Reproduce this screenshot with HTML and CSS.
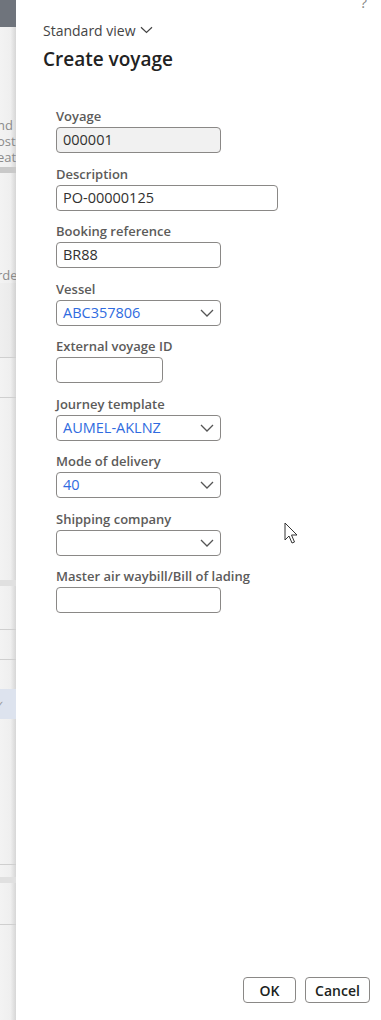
FILE: index.html
```html
<!DOCTYPE html>
<html lang="en">
<head>
    <meta charset="UTF-8">
    <meta name="viewport" content="width=device-width, initial-scale=1.0">
    <title>Create voyage</title>
    <link rel="stylesheet" href="styles.css">
</head>
<body>
    <div class="backdrop">
        <div class="bd-top"></div>
        <div class="bd-gap" style="height: 90px"></div>
        <div class="bd-text">nd</div>
        <div class="bd-text">osts</div>
        <div class="bd-text">eat</div>
        <div class="bd-gap" style="height: 2px"></div>
        <div class="bd-bar"></div>
        <div class="bd-gap" style="height: 94px"></div>
        <div class="bd-text">rde</div>
        <div class="bd-band" style="height: 74px"></div>
        <div class="bd-line"></div>
        <div class="bd-gap" style="height: 39px"></div>
        <div class="bd-line"></div>
        <div class="bd-gap" style="height: 182px"></div>
        <div class="bd-bar thin"></div>
        <div class="bd-gap" style="height: 43px"></div>
        <div class="bd-line"></div>
        <div class="bd-gap" style="height: 29px"></div>
        <div class="bd-line"></div>
        <div class="bd-gap" style="height: 29px"></div>
        <div class="bd-selected">&#10003;</div>
        <div class="bd-gap" style="height: 145px"></div>
        <div class="bd-line"></div>
        <div class="bd-gap" style="height: 12px"></div>
        <div class="bd-bar thin"></div>
        <div class="bd-gap" style="height: 41px"></div>
        <div class="bd-line"></div>
    </div>

    <div class="panel">
        <div class="topbar"><span class="help">?</span></div>

        <div class="view-picker">
            Standard view
            <svg class="chev-small" width="13" height="8" viewBox="0 0 13 8"><path d="M1 1.2 L6.5 6.5 L12 1.2" fill="none" stroke="#444" stroke-width="1.2"/></svg>
        </div>
        <h1>Create voyage</h1>

        <div class="fields">
            <div class="field">
                <label>Voyage</label>
                <div class="input readonly w-md">000001</div>
            </div>
            <div class="field">
                <label>Description</label>
                <div class="input w-lg">PO-00000125</div>
            </div>
            <div class="field">
                <label>Booking reference</label>
                <div class="input w-md">BR88</div>
            </div>
            <div class="field">
                <label>Vessel</label>
                <div class="input select w-md"><span class="link">ABC357806</span><svg class="chev" width="14" height="8" viewBox="0 0 14 8"><path d="M1 1 L7 7 L13 1" fill="none" stroke="#555" stroke-width="1.3"/></svg></div>
            </div>
            <div class="field">
                <label>External voyage ID</label>
                <div class="input w-sm"></div>
            </div>
            <div class="field">
                <label>Journey template</label>
                <div class="input select w-md"><span class="link">AUMEL-AKLNZ</span><svg class="chev" width="14" height="8" viewBox="0 0 14 8"><path d="M1 1 L7 7 L13 1" fill="none" stroke="#555" stroke-width="1.3"/></svg></div>
            </div>
            <div class="field">
                <label>Mode of delivery</label>
                <div class="input select w-md"><span class="link">40</span><svg class="chev" width="14" height="8" viewBox="0 0 14 8"><path d="M1 1 L7 7 L13 1" fill="none" stroke="#555" stroke-width="1.3"/></svg></div>
            </div>
            <div class="field">
                <label>Shipping company</label>
                <div class="input select w-md"><span></span><svg class="chev" width="14" height="8" viewBox="0 0 14 8"><path d="M1 1 L7 7 L13 1" fill="none" stroke="#555" stroke-width="1.3"/></svg></div>
            </div>
            <div class="field">
                <label>Master air waybill/Bill of lading</label>
                <div class="input w-md"></div>
            </div>
        </div>

        <div class="actions">
            <button class="btn btn-ok">OK</button>
            <button class="btn btn-cancel">Cancel</button>
        </div>

        <svg class="cursor" width="16" height="24" viewBox="0 0 16 24">
            <path d="M1 1 L1 18 L5 14 L8 21 L10.5 20 L7.5 13 L13 13 Z" fill="#fff" stroke="#333" stroke-width="1" stroke-linejoin="round"/>
        </svg>
    </div>
</body>
</html>
```

FILE: styles.css
```css
body {
    margin: 0;
    padding: 0;
    display: flex;
    height: 1020px;
    overflow: hidden;
    font-family: "Open Sans", "Noto Sans", Arial, sans-serif;
    background: #fff;
    color: #201f1e;
}
.backdrop {
    width: 16px;
    flex: none;
    display: flex;
    flex-direction: column;
    background: linear-gradient(to right, #f3f3f3 0%, #efefef 65%, #d6d6d6 100%);
    overflow: hidden;
    font-size: 13px;
    color: #8a8a8a;
}
.bd-top {
    height: 27px;
    background: #6f747c;
}
.bd-text {
    height: 16px;
    line-height: 16px;
    white-space: nowrap;
    margin-left: -3px;
}
.bd-bar {
    height: 6px;
    background: #c9c9c9;
}
.bd-bar.thin {
    height: 6px;
    background: #e0e0e0;
}
.bd-band {
    background: rgba(0, 0, 0, 0.015);
}
.bd-line {
    height: 1px;
    background: #cfcfcf;
}
.bd-selected {
    height: 30px;
    line-height: 30px;
    background: #dde3ee;
    font-size: 10px;
    color: #999;
    margin-left: -4px;
}
.panel {
    flex: 1;
    position: relative;
    padding: 0 11px 17px 27px;
    display: flex;
    flex-direction: column;
    background: #fff;
}
.topbar {
    height: 12px;
    display: flex;
    justify-content: flex-end;
    overflow: hidden;
}
.help {
    font-size: 15px;
    line-height: 12px;
    color: #888;
    margin-top: -4px;
    margin-right: 3px;
}
.view-picker {
    margin-top: 9px;
    height: 20px;
    line-height: 20px;
    font-size: 14px;
    color: #444;
    display: flex;
    align-items: center;
    gap: 4px;
}
.chev-small {
    margin-top: -2px;
}
h1 {
    margin: 4px 0 0;
    font-size: 19px;
    line-height: 28px;
    font-weight: 600;
    color: #222;
}
.fields {
    padding: 35px 0 0 13px;
    display: flex;
    flex-direction: column;
}
.field {
    margin-bottom: 12.5px;
    display: flex;
    flex-direction: column;
}
.field label {
    font-size: 13px;
    line-height: 16px;
    font-weight: 600;
    color: #5c5b5a;
    margin-bottom: 3px;
    white-space: nowrap;
}
.input {
    box-sizing: border-box;
    height: 26px;
    border: 1px solid #8a8886;
    border-radius: 4px;
    padding: 0 6px;
    font-size: 14.5px;
    line-height: 24px;
    color: #323130;
    display: flex;
    align-items: center;
    justify-content: space-between;
}
.input.readonly {
    background: #f1f1f1;
}
.w-sm { width: 107px; }
.w-md { width: 165px; }
.w-lg { width: 222px; }
.link {
    color: #2f6be0;
}
.actions {
    margin-top: auto;
    display: flex;
    justify-content: flex-end;
    gap: 9px;
}
.btn {
    height: 26px;
    padding: 0;
    border: 1px solid #8a8886;
    border-radius: 4px;
    background: #fff;
    font-family: "Open Sans", "Noto Sans", Arial, sans-serif;
    font-size: 14px;
    font-weight: 600;
    color: #201f1e;
}
.btn-ok {
    width: 53px;
}
.btn-cancel {
    width: 65px;
}
.cursor {
    position: absolute;
    left: 268px;
    top: 522px;
}
```
